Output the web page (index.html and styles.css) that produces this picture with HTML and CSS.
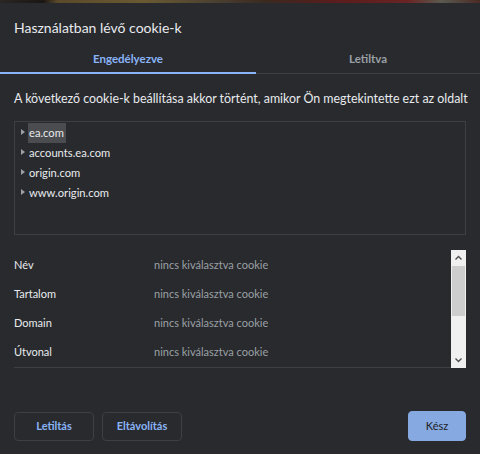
FILE: index.html
```html
<!DOCTYPE html>
<html lang="hu">
<head>
<meta charset="utf-8">
<link rel="stylesheet" href="styles.css">
</head>
<body>
<div class="backdrop"></div>
<div class="dialog">
  <h1 class="title">Használatban lévő cookie-k</h1>
  <div class="tabs">
    <div class="tab active">Engedélyezve</div>
    <div class="tab">Letiltva</div>
  </div>
  <p class="desc">A következő cookie-k beállítása akkor történt, amikor Ön megtekintette ezt az oldalt</p>
  <div class="tree">
    <div class="node"><span class="caret"></span><span class="label sel">ea.com</span></div>
    <div class="node"><span class="caret"></span><span class="label">accounts.ea.com</span></div>
    <div class="node"><span class="caret"></span><span class="label">origin.com</span></div>
    <div class="node"><span class="caret"></span><span class="label">www.origin.com</span></div>
  </div>
  <div class="details">
    <div class="rows">
      <div class="row"><span class="k">Név</span><span class="v">nincs kiválasztva cookie</span></div>
      <div class="row"><span class="k">Tartalom</span><span class="v">nincs kiválasztva cookie</span></div>
      <div class="row"><span class="k">Domain</span><span class="v">nincs kiválasztva cookie</span></div>
      <div class="row"><span class="k">Útvonal</span><span class="v">nincs kiválasztva cookie</span></div>
    </div>
    <div class="scrollbar">
      <svg class="arr" width="15" height="16" viewBox="0 0 15 16"><path d="M4.5 9.5 L7.5 6.5 L10.5 9.5" fill="none" stroke="#505050" stroke-width="1.4"/></svg>
      <div class="track"><div class="thumb"></div></div>
      <svg class="arr" width="15" height="16" viewBox="0 0 15 16"><path d="M4.5 6.5 L7.5 9.5 L10.5 6.5" fill="none" stroke="#505050" stroke-width="1.4"/></svg>
    </div>
  </div>
  <div class="actions">
    <button class="btn">Letiltás</button>
    <button class="btn">Eltávolítás</button>
    <span class="spacer"></span>
    <button class="btn primary">Kész</button>
  </div>
</div>
</body>
</html>
```
FILE: styles.css
```css
* { box-sizing: border-box; }
html, body { margin: 0; padding: 0; }
body {
  width: 480px;
  height: 454px;
  background: #292a2d;
  font-family: Lato, "Open Sans", sans-serif;
  color: #e8eaed;
  overflow: hidden;
}
.backdrop {
  height: 3px;
  background: linear-gradient(90deg, #2a2623 0%, #1a1614 9%, #5a4a2a 12%, #6a5a32 30%, #4a4030 45%, #3a2a20 55%, #5a1c1c 70%, #6a2424 85%, #5a5a50 92%, #4a2a24 100%);
}
.title {
  margin: 0;
  padding: 15px 14px 0;
  font-size: 14px;
  font-weight: 400;
  line-height: 20px;
  height: 45px;
  color: #e8eaed;
}
.tabs {
  display: flex;
  border-bottom: 1px solid #3c4043;
  height: 26px;
}
.tab {
  width: 256px;
  text-align: center;
  font-size: 11.5px;
  font-weight: 700;
  line-height: 22px;
  color: #9aa0a6;
}
.tab + .tab { flex: 1; }
.tab.active {
  color: #8ab4f8;
  box-shadow: inset 0 -2px 0 #8ab4f8;
  margin-bottom: -1px;
}
.desc {
  margin: 0;
  padding: 15px 14px 0;
  font-size: 12.4px;
  line-height: 20px;
  height: 47px;
  color: #e8eaed;
  white-space: nowrap;
}
.tree {
  margin: 0 14px;
  height: 114px;
  border: 1px solid #3c4043;
  padding: 1px 0 0 5px;
}
.node {
  display: flex;
  align-items: center;
  height: 20px;
  font-size: 11.2px;
}
.caret {
  width: 0; height: 0;
  border-top: 3.5px solid transparent;
  border-bottom: 3.5px solid transparent;
  border-left: 4px solid #9aa0a6;
  margin: 0 3px 2px 1px;
}
.label {
  padding: 0 2px 0 1px;
  line-height: 20px;
  color: #e8eaed;
}
.label.sel { background: #4a4c50; }
.details {
  display: flex;
  margin: 15px 14px 0;
  height: 118px;
}
.rows {
  flex: 1;
  border-bottom: 1px solid #3c4043;
  padding-top: 0;
}
.row {
  display: flex;
  height: 29px;
  align-items: center;
  font-size: 11px;
}
.k { width: 140px; color: #e8eaed; }
.v { color: #9aa0a6; }
.scrollbar {
  width: 15px;
  background: #f0f0f0;
  display: flex;
  flex-direction: column;
}
.arr { display: block; flex: none; }
.track { flex: 1; }
.thumb { height: 50px; background: #cdcdcd; margin: 0 1px; }
.actions {
  display: flex;
  align-items: center;
  padding: 0 14px;
  margin-top: 43px;
  gap: 8px;
}
.spacer { flex: 1; }
.btn {
  font-family: inherit;
  font-size: 11px;
  font-weight: 700;
  height: 29px;
  width: 80px;
  border: 1px solid #3c4043;
  border-radius: 4px;
  background: #292a2d;
  color: #8ab4f8;
  padding: 0 0 2px;
}
.btn.primary {
  width: 58px;
  height: 30px;
  background: #86a9e2;
  border-color: #86a9e2;
  color: #202124;
  font-weight: 400;
  font-size: 11px;
}
```
